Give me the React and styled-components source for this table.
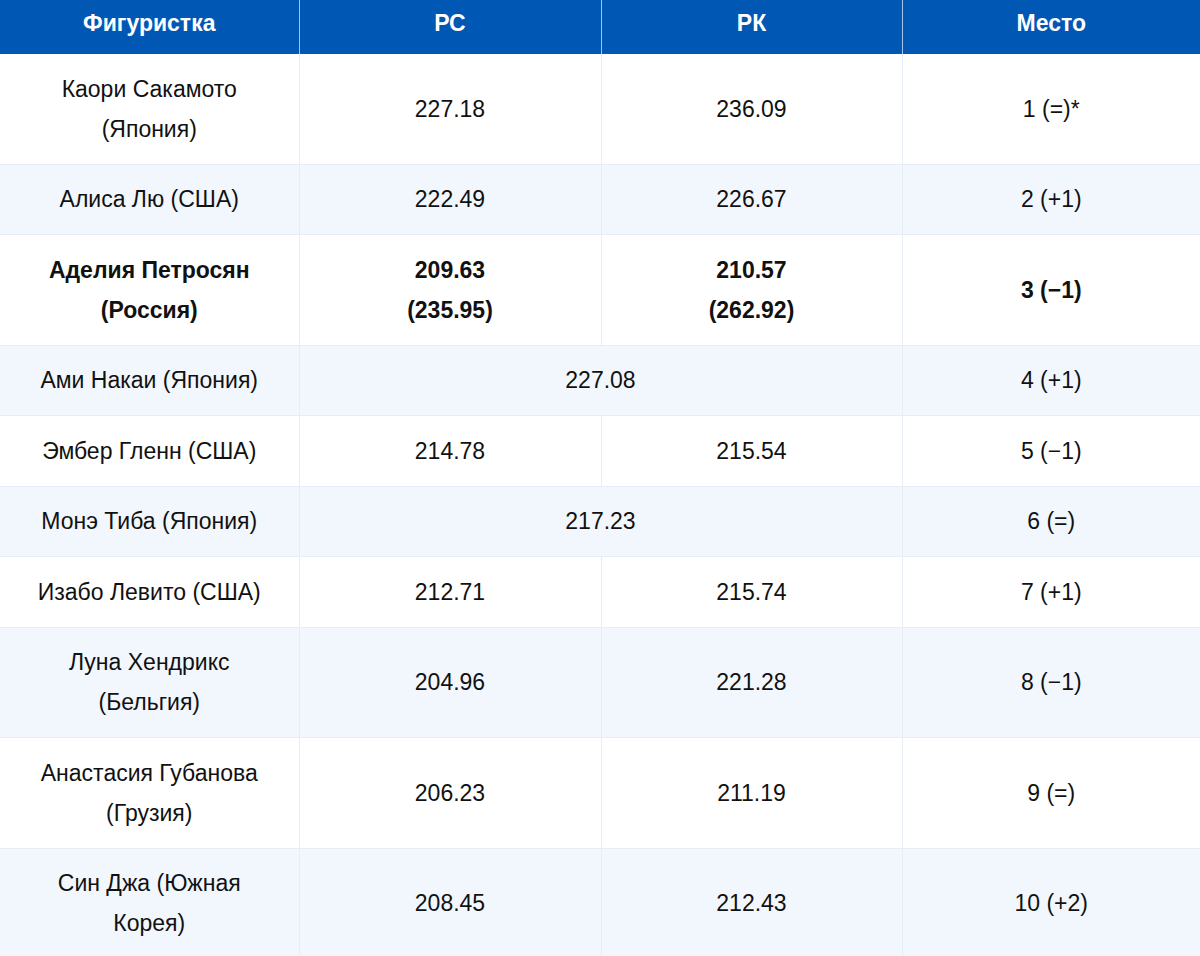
import React from "react";
import styled, { createGlobalStyle } from "styled-components";

const GlobalStyle = createGlobalStyle`
  html, body {
    margin: 0;
    padding: 0;
    background: #ffffff;
  }
  body {
    font-family: "Liberation Sans", Arial, sans-serif;
    color: #111111;
  }
`;

const Table = styled.table`
  width: 1200px;
  border-collapse: collapse;
  table-layout: fixed;
  font-size: 23px;
`;

const HeadCell = styled.th`
  background: #0057b4;
  color: #ffffff;
  font-weight: bold;
  font-size: 23px;
  line-height: 26px;
  padding: 10px 10px 18px;
  text-align: center;
  border-left: 1px solid #a3c2e6;
  &:first-child {
    border-left: none;
  }
`;

const Row = styled.tr`
  background: ${(p) => (p.$striped ? "#f2f7fd" : "#ffffff")};
  border-bottom: 1px solid #e6edf5;
`;

const Cell = styled.td`
  padding: 14.75px 24px;
  line-height: 40px;
  text-align: center;
  vertical-align: middle;
  font-weight: ${(p) => (p.$bold ? "bold" : "normal")};
  border-left: 1px solid #e6edf5;
  &:first-child {
    border-left: none;
  }
`;

const Score = styled.span`
  display: inline-block;
  max-width: 120px;
`;

const rows = [
  { name: "Каори Сакамото (Япония)", sp: "227.18", fs: "236.09", place: "1 (=)*" },
  { name: "Алиса Лю (США)", sp: "222.49", fs: "226.67", place: "2 (+1)" },
  { name: "Аделия Петросян (Россия)", sp: "209.63 (235.95)", fs: "210.57 (262.92)", place: "3 (−1)", bold: true },
  { name: "Ами Накаи (Япония)", total: "227.08", place: "4 (+1)" },
  { name: "Эмбер Гленн (США)", sp: "214.78", fs: "215.54", place: "5 (−1)" },
  { name: "Монэ Тиба (Япония)", total: "217.23", place: "6 (=)" },
  { name: "Изабо Левито (США)", sp: "212.71", fs: "215.74", place: "7 (+1)" },
  { name: "Луна Хендрикс (Бельгия)", sp: "204.96", fs: "221.28", place: "8 (−1)" },
  { name: "Анастасия Губанова (Грузия)", sp: "206.23", fs: "211.19", place: "9 (=)" },
  { name: "Син Джа (Южная Корея)", sp: "208.45", fs: "212.43", place: "10 (+2)" },
];

export default function App() {
  return (
    <>
      <GlobalStyle />
      <Table>
        <colgroup>
          <col style={{ width: 299 }} />
          <col style={{ width: 302 }} />
          <col style={{ width: 301 }} />
          <col style={{ width: 298 }} />
        </colgroup>
        <thead>
          <tr>
            <HeadCell>Фигуристка</HeadCell>
            <HeadCell>РС</HeadCell>
            <HeadCell>РК</HeadCell>
            <HeadCell>Место</HeadCell>
          </tr>
        </thead>
        <tbody>
          {rows.map((r, i) => (
            <Row key={r.name} $striped={i % 2 === 1}>
              <Cell $bold={r.bold}>{r.name}</Cell>
              {r.total ? (
                <Cell colSpan={2}>{r.total}</Cell>
              ) : (
                <>
                  <Cell $bold={r.bold}>
                    <Score>{r.sp}</Score>
                  </Cell>
                  <Cell $bold={r.bold}>
                    <Score>{r.fs}</Score>
                  </Cell>
                </>
              )}
              <Cell $bold={r.bold}>{r.place}</Cell>
            </Row>
          ))}
        </tbody>
      </Table>
    </>
  );
}
